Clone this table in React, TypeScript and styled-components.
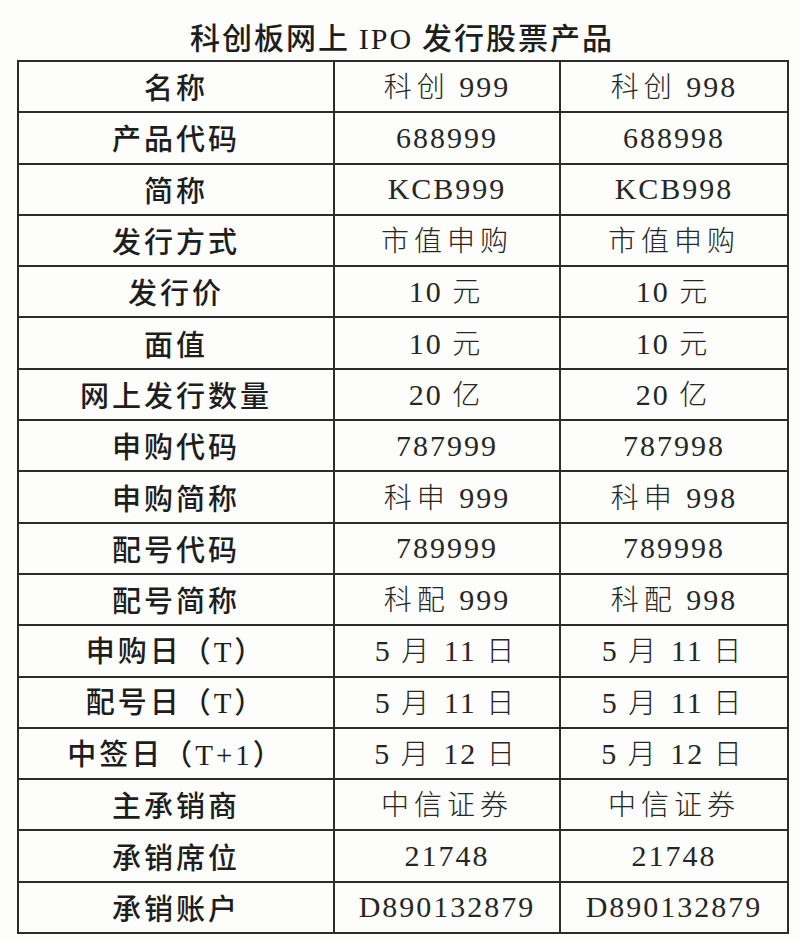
import React from "react";
import styled, { createGlobalStyle } from "styled-components";

const GlobalStyle = createGlobalStyle`
  html, body {
    margin: 0;
    padding: 0;
    background: #fdfdfc;
  }
`;

const Page = styled.div`
  width: 800px;
  height: 942px;
  padding: 14px 0 0 17px;
  box-sizing: border-box;
  background: #fdfdfc;
  color: #1e1e1e;
`;

const Title = styled.h1`
  margin: 0;
  width: 770px;
  height: 46px;
  text-align: center;
  font-family: "Noto Sans CJK SC", sans-serif;
  font-weight: 500;
  font-size: 30px;
  line-height: 44px;
  letter-spacing: 2px;
`;

const Latin = styled.span`
  font-family: "Liberation Serif", serif;
  font-weight: 400;
`;

const Table = styled.table`
  width: 770px;
  border-collapse: collapse;
  table-layout: fixed;
  border: 2px solid #2c2c2c;
`;

const Row = styled.tr`
  height: 51.3px;
`;

const Label = styled.td`
  padding: 0;
  border: 2px solid #2c2c2c;
  text-align: center;
  font-family: "Noto Sans CJK SC", sans-serif;
  font-weight: 500;
  font-size: 29px;
  line-height: 1;
  letter-spacing: 3px;
`;

const Value = styled.td`
  padding: 0;
  border: 2px solid #2c2c2c;
  text-align: center;
  font-family: "Liberation Serif", "Noto Sans CJK SC", serif;
  font-weight: 400;
  font-size: 30px;
  line-height: 1;
  letter-spacing: 2px;
  color: #262626;
`;

const Cjk = styled.span`
  font-family: "Noto Sans CJK SC", sans-serif;
  font-weight: 300;
  font-size: 28px;
  letter-spacing: 5px;
`;

const rows: [string, string, string][] = [
  ["名称", "科创 999", "科创 998"],
  ["产品代码", "688999", "688998"],
  ["简称", "KCB999", "KCB998"],
  ["发行方式", "市值申购", "市值申购"],
  ["发行价", "10 元", "10 元"],
  ["面值", "10 元", "10 元"],
  ["网上发行数量", "20 亿", "20 亿"],
  ["申购代码", "787999", "787998"],
  ["申购简称", "科申 999", "科申 998"],
  ["配号代码", "789999", "789998"],
  ["配号简称", "科配 999", "科配 998"],
  ["申购日（T）", "5 月 11 日", "5 月 11 日"],
  ["配号日（T）", "5 月 11 日", "5 月 11 日"],
  ["中签日（T+1）", "5 月 12 日", "5 月 12 日"],
  ["主承销商", "中信证券", "中信证券"],
  ["承销席位", "21748", "21748"],
  ["承销账户", "D890132879", "D890132879"],
];

const CJK_RUN = /[\u3000-\u9fff\uff00-\uffef]+|[^\u3000-\u9fff\uff00-\uffef]+/g;
const IS_CJK = /[\u3000-\u9fff\uff00-\uffef]/;

// split a value into runs of CJK and latin characters
const renderMixed = (text: string) => {
  const parts = text.match(CJK_RUN) || [];
  return parts.map((p, i) => (IS_CJK.test(p) ? <Cjk key={i}>{p}</Cjk> : <span key={i}>{p}</span>));
};

const renderLabel = (text: string) => {
  const parts = text.match(/[A-Za-z0-9+]+|[^A-Za-z0-9+]+/g) || [];
  return parts.map((p, i) => (/[A-Za-z0-9+]/.test(p) ? <Latin key={i}>{p}</Latin> : <span key={i}>{p}</span>));
};

const App: React.FC = () => {
  return (
    <Page>
      <GlobalStyle />
      <Title>
        科创板网上 <Latin>IPO</Latin> 发行股票产品
      </Title>
      <Table>
        <colgroup>
          <col style={{ width: 316 }} />
          <col style={{ width: 226 }} />
          <col style={{ width: 228 }} />
        </colgroup>
        <tbody>
          {rows.map(([label, a, b]) => (
            <Row key={label}>
              <Label>{renderLabel(label)}</Label>
              <Value>{renderMixed(a)}</Value>
              <Value>{renderMixed(b)}</Value>
            </Row>
          ))}
        </tbody>
      </Table>
    </Page>
  );
};

export default App;
